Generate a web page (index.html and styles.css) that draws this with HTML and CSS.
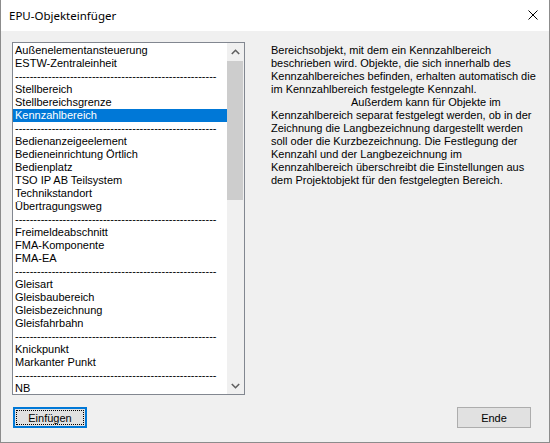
FILE: index.html
```html
<!DOCTYPE html>
<html lang="de">
<head>
<meta charset="utf-8">
<title>EPU-Objekteinfüger</title>
<link rel="stylesheet" href="styles.css">
</head>
<body>
<div class="window">
  <div class="titlebar">
    <span class="title">EPU-Objekteinfüger</span>
    <span class="close">
      <svg width="10" height="10" viewBox="0 0 10 10"><path d="M0.5 0.5 L9.5 9.5 M9.5 0.5 L0.5 9.5" stroke="#000" stroke-width="1" fill="none"/></svg>
    </span>
  </div>
  <div class="client">
    <div class="main">
      <div class="listbox">
        <ul class="items">
          <li>Außenelementansteuerung</li>
          <li>ESTW-Zentraleinheit</li>
          <li class="sep">-------------------------------------------------------</li>
          <li>Stellbereich</li>
          <li>Stellbereichsgrenze</li>
          <li class="selected">Kennzahlbereich</li>
          <li class="sep">-------------------------------------------------------</li>
          <li>Bedienanzeigeelement</li>
          <li>Bedieneinrichtung Örtlich</li>
          <li>Bedienplatz</li>
          <li>TSO IP AB Teilsystem</li>
          <li>Technikstandort</li>
          <li>Übertragungsweg</li>
          <li class="sep">-------------------------------------------------------</li>
          <li>Freimeldeabschnitt</li>
          <li>FMA-Komponente</li>
          <li>FMA-EA</li>
          <li class="sep">-------------------------------------------------------</li>
          <li>Gleisart</li>
          <li>Gleisbaubereich</li>
          <li>Gleisbezeichnung</li>
          <li>Gleisfahrbahn</li>
          <li class="sep">-------------------------------------------------------</li>
          <li>Knickpunkt</li>
          <li>Markanter Punkt</li>
          <li class="sep">-------------------------------------------------------</li>
          <li>NB</li>
        </ul>
        <div class="scrollbar">
          <div class="arrow">
            <svg width="9" height="6" viewBox="0 0 9 6"><path d="M0.8 5 L4.5 1.3 L8.2 5" stroke="#606060" stroke-width="1.6" fill="none"/></svg>
          </div>
          <div class="track"><div class="thumb"></div></div>
          <div class="arrow">
            <svg width="9" height="6" viewBox="0 0 9 6"><path d="M0.8 1 L4.5 4.7 L8.2 1" stroke="#606060" stroke-width="1.6" fill="none"/></svg>
          </div>
        </div>
      </div>
      <div class="desc">
        <p>Bereichsobjekt, mit dem ein Kennzahlbereich<br>beschrieben wird. Objekte, die sich innerhalb des<br>Kennzahlbereiches befinden, erhalten automatisch die<br>im Kennzahlbereich festgelegte Kennzahl.</p>
        <p class="indent">Außerdem kann für Objekte im<br>Kennzahlbereich separat festgelegt werden, ob in der<br>Zeichnung die Langbezeichnung dargestellt werden<br>soll oder die Kurzbezeichnung. Die Festlegung der<br>Kennzahl und der Langbezeichnung im<br>Kennzahlbereich überschreibt die Einstellungen aus<br>dem Projektobjekt für den festgelegten Bereich.</p>
      </div>
    </div>
    <div class="buttons">
      <button class="btn default"><span class="focus">Einfügen</span></button>
      <button class="btn">Ende</button>
    </div>
  </div>
</div>
</body>
</html>
```
FILE: styles.css
```css
html, body {
  margin: 0;
  padding: 0;
  background: #ffffff;
}
.window {
  width: 550px;
  height: 443px;
  box-sizing: border-box;
  border: 1px solid #8c8c8c;
  border-top: none;
  display: flex;
  flex-direction: column;
  background: #f0f0f0;
  font-family: "Liberation Sans", Arial, sans-serif;
  font-size: 11px;
  color: #000;
}
.titlebar {
  height: 31px;
  flex: none;
  background: #ffffff;
  display: flex;
  align-items: center;
  justify-content: space-between;
  padding: 0 11px 0 8px;
}
.title {
  font-family: "Noto Sans", sans-serif;
  font-size: 11.5px;
  color: #000;
  padding-bottom: 1px;
}
.close {
  display: flex;
  margin-top: -1px;
}
.client {
  flex: 1;
  padding: 11px 18px 0 11px;
  display: flex;
  flex-direction: column;
}
.main {
  display: flex;
  gap: 26px;
}
.listbox {
  width: 233px;
  height: 353px;
  box-sizing: border-box;
  border: 1px solid #828790;
  background: #ffffff;
  display: flex;
  flex: none;
}
.items {
  list-style: none;
  margin: 0;
  padding: 1px 0 0 0;
  flex: 1;
  overflow: hidden;
  white-space: nowrap;
}
.items li {
  height: 13px;
  line-height: 13px;
  padding-left: 2px;
}
.items li.selected {
  background: #0078d7;
  color: #ffffff;
}
.scrollbar {
  width: 17px;
  flex: none;
  background: #f0f0f0;
  display: flex;
  flex-direction: column;
}
.arrow {
  height: 17px;
  flex: none;
  display: flex;
  align-items: center;
  justify-content: center;
}
.track {
  flex: 1;
  padding-top: 1px;
}
.thumb {
  height: 139px;
  margin: 0 1px 0 0;
  background: #cdcdcd;
}
.desc {
  flex: none;
  margin-top: 2px;
  line-height: 13px;
  white-space: nowrap;
}
.desc p {
  margin: 0;
}
.desc p.indent {
  text-indent: 80px;
}
.buttons {
  display: flex;
  justify-content: space-between;
  margin-top: 12px;
  padding-left: 1px;
}
.btn {
  width: 74px;
  height: 21px;
  box-sizing: border-box;
  margin: 0;
  padding: 0;
  background: #e1e1e1;
  border: 1px solid #adadad;
  font-family: "Liberation Sans", Arial, sans-serif;
  font-size: 11px;
  color: #000;
  display: flex;
  align-items: center;
  justify-content: center;
}
.btn.default {
  border: 2px solid #0078d7;
  padding: 1px;
}
.btn .focus {
  flex: 1;
  align-self: stretch;
  border: 1px dotted #000;
  display: flex;
  align-items: center;
  justify-content: center;
}
```
